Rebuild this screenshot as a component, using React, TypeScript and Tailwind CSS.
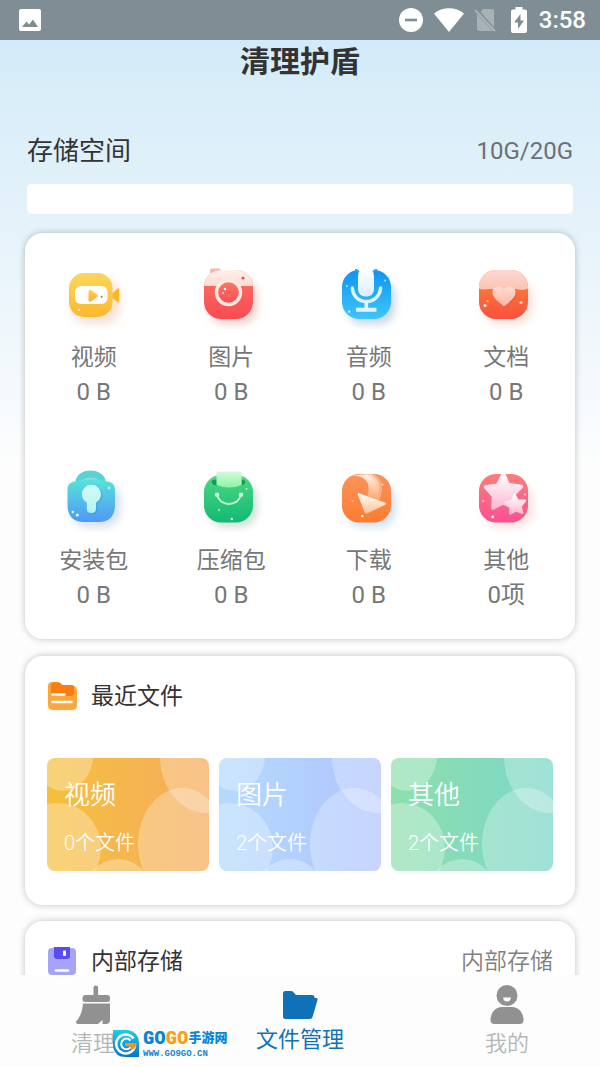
import type { ReactNode } from "react";

function Sheen({ id, from, to, diagonal }: { id: string; from: string; to: string; diagonal?: boolean }) {
  return (
    <linearGradient id={id} x1="0" y1="0" x2={diagonal ? "1" : "0"} y2="1">
      <stop offset="0" stopColor={from} />
      <stop offset="1" stopColor={to} />
    </linearGradient>
  );
}

function Glyph({ id, shadow, children }: { id: string; shadow: string; children: ReactNode }) {
  return (
    <svg width="72" height="72" viewBox="0 0 72 72" fill="none" aria-hidden="true">
      <defs>
        <filter id={`${id}-blur`} x="-30%" y="-30%" width="160%" height="160%">
          <feGaussianBlur stdDeviation="4" />
        </filter>
        <clipPath id={`${id}-clip`}>
          <rect x="9" y="13" width="49" height="49" rx="17" />
        </clipPath>
      </defs>
      <rect x="14" y="23" width="48" height="44" rx="16" fill={shadow} opacity="0.4" filter={`url(#${id}-blur)`} />
      {children}
    </svg>
  );
}

const VideoGlyph = () => (
  <Glyph id="video" shadow="#e8b890">
    <defs>
      <Sheen id="video-a" from="#fdd65c" to="#fcb92e" />
      <Sheen id="video-b" from="#ffd447" to="#f9ac36" />
    </defs>
    <path d="M54 37l5.500-5.500q1.700-.8 1.700 1v11.500q0 1.800-1.700 1L54 41z" fill="#fdb52e" />
    <rect x="11" y="16" width="43.500" height="44" rx="15" fill="url(#video-a)" />
    <rect x="17" y="29" width="32.500" height="18" rx="6" fill="#fff" />
    <path d="M30.500 34.500c0-1.800 1.500-2.300 2.800-1.200l5.700 4.200c1 .8 1 1.800 0 2.600l-5.700 4.200c-1.300 1-2.800.4-2.800-1.200z" fill="url(#video-b)" />
    <circle cx="43.700" cy="39.700" r="1" fill="#a8834f" />
    <circle cx="21" cy="53" r="1.100" fill="#fff" opacity=".8" />
  </Glyph>
);

const CameraGlyph = () => (
  <Glyph id="camera" shadow="#d48478">
    <defs>
      <Sheen id="camera-a" from="#fb7468" to="#fa4a52" />
      <Sheen id="camera-b" from="#fff0e8" to="#fddcd2" />
      <Sheen id="camera-c" from="#fb7a68" to="#f54b55" />
    </defs>
    <path d="M15 16v-2.500q0-2 2-2h7q2 0 2 2V16z" fill="#fbb6ac" />
    <g clipPath="url(#camera-clip)">
      <rect x="9" y="13" width="49" height="49" fill="url(#camera-a)" />
      <rect x="9" y="13" width="49" height="16" fill="url(#camera-b)" />
    </g>
    <circle cx="33.500" cy="35.500" r="12" fill="url(#camera-c)" stroke="#ffe9e1" strokeWidth="3.400" />
    <circle cx="48" cy="21" r="1.500" fill="#e84c55" />
    <circle cx="30" cy="32" r="1.200" fill="#fff" />
    <circle cx="28" cy="36" r=".8" fill="#fff" />
    <circle cx="34" cy="39" r=".6" fill="#ffd36a" />
  </Glyph>
);

const MicGlyph = () => (
  <Glyph id="mic" shadow="#6f9cc4">
    <defs>
      <Sheen id="mic-a" from="#0e95f2" to="#40c5fb" />
      <Sheen id="mic-b" from="#ffffff" to="#d9effd" />
    </defs>
    <rect x="9" y="13" width="49" height="49" rx="17" fill="url(#mic-a)" />
    <path d="M20 12c4.500.5 6 3 6 7h14c0-4 1.500-6.500 6-7z" fill="#fff" />
    <path d="M22 12.700c3.500 0 4.500 2.500 4.500 5M44 12.700c-3.500 0-4.500 2.500-4.500 5" stroke="#1898f0" strokeWidth="1.200" />
    <rect x="25" y="12" width="16" height="27.500" rx="7" fill="url(#mic-b)" />
    <path d="M19.300 31c.8 8.500 6.500 13.500 14 13.500S46.800 39.500 47.600 31" stroke="#e1f4fe" strokeWidth="3.400" strokeLinecap="round" />
    <path d="M33.300 45v7" stroke="#e1f4fe" strokeWidth="3.600" />
    <rect x="23" y="50.700" width="20.500" height="4" rx="1" fill="#e1f4fe" />
    <circle cx="14" cy="29" r="1" fill="#fff" opacity=".7" />
    <circle cx="52" cy="23.500" r="1" fill="#fff" opacity=".7" />
    <circle cx="16.200" cy="54.500" r="1.200" fill="#fff" opacity=".8" />
  </Glyph>
);

const HeartGlyph = () => (
  <Glyph id="heart" shadow="#e8ac98">
    <defs>
      <Sheen id="heart-a" from="#fc8a3c" to="#f9503c" />
      <Sheen id="heart-b" from="#fbd9d5" to="#fdc0ae" />
      <Sheen id="heart-c" from="#ffdcd6" to="#ffb4a0" />
    </defs>
    <g clipPath="url(#heart-clip)">
      <rect x="9" y="13" width="49" height="49" fill="url(#heart-a)" />
      <path d="M9 13h49v18.500c-5 2.500-9 1-13 .5s-8 2.500-12 2.500-8-2-12-2.500-8 1.500-12-.5z" fill="url(#heart-b)" />
    </g>
    <path d="M34 49.500C30 46 22.500 41 22.500 35.500c0-6.500 8-8 11.500-3 3.500-5 11.500-3.500 11.500 3C45.500 41 38 46 34 49.500z" fill="#d9502c" opacity=".25" transform="translate(1 1.500)" />
    <path d="M34 49.500C30 46 22.500 41 22.500 35.500c0-6.500 8-8 11.500-3 3.500-5 11.500-3.500 11.500 3C45.500 41 38 46 34 49.500z" fill="url(#heart-c)" />
    <circle cx="15" cy="48.500" r="1.500" fill="#fff" opacity=".9" />
    <circle cx="17.500" cy="44" r="1" fill="#fff" opacity=".6" />
    <circle cx="51" cy="45.500" r="1.500" fill="#fff" opacity=".8" />
  </Glyph>
);

const LockGlyph = () => (
  <Glyph id="lock" shadow="#8fb0d4">
    <defs>
      <Sheen id="lock-a" from="#57e3d9" to="#4f97f8" />
      <Sheen id="lock-b" from="#d3fcf6" to="#b3f3f4" />
    </defs>
    <path d="M17.500 22a15 11.500 0 0 1 30 0z" fill="#57d3da" />
    <path d="M24 21a9 5 0 0 1 17 0z" fill="#a3d5cf" />
    <path d="M9.500 31c0-6 1.500-8 7-9.500 5.500-1.400 10-2 16.500-2s11 .6 16.500 2c5.500 1.500 7.500 3.500 7.500 9.500v14c0 11-6 17-16 17H25.500c-10 0-16-6-16-17z" fill="url(#lock-a)" />
    <path d="M28.800 42.500a9.500 9.500 0 1 1 9.200 0V49q0 4-4.600 4t-4.600-4z" fill="#348cc7" opacity=".35" transform="translate(1.500 1)" />
    <path d="M28.800 42.500a9.500 9.500 0 1 1 9.200 0V49q0 4-4.600 4t-4.600-4z" fill="url(#lock-b)" />
    <circle cx="14.800" cy="52" r="1.200" fill="#fff" opacity=".9" />
    <circle cx="19.300" cy="55" r="1.600" fill="#fff" opacity=".9" />
    <circle cx="51" cy="28" r="1.400" fill="#fff" opacity=".6" />
  </Glyph>
);

const BagGlyph = () => (
  <Glyph id="bag" shadow="#8fb09c">
    <defs>
      <Sheen id="bag-a" from="#4fd782" to="#10ba74" />
      <Sheen id="bag-b" from="#d5fbdc" to="#8cf4a4" />
    </defs>
    <rect x="9" y="15" width="49" height="47.500" rx="17" fill="url(#bag-a)" />
    <path d="M16.500 21.500q1-2 5-2h24q4 0 5 2-1 4-5 4h-24q-4 0-5-4z" fill="#109b56" />
    <path d="M21.500 11.500h25.200V25q-12.600 5-25.200 0z" fill="url(#bag-b)" />
    <path d="M22 35c3 12 21 12 24 0" stroke="#c4f7d8" strokeWidth="1.800" strokeLinecap="round" />
    <circle cx="22" cy="34.700" r="2.300" fill="#c4f7d8" />
    <circle cx="46" cy="34.700" r="2.300" fill="#c4f7d8" />
    <circle cx="24" cy="50" r="1" fill="#fff" opacity=".7" />
    <circle cx="36.800" cy="59" r="1.200" fill="#fff" opacity=".9" />
    <circle cx="51.500" cy="29" r="1" fill="#fff" opacity=".6" />
  </Glyph>
);

const DownloadGlyph = () => (
  <Glyph id="download" shadow="#80b4d4">
    <defs>
      <Sheen id="download-a" from="#fa9459" to="#fc7c31" />
      <Sheen id="download-b" from="#fff3ea" to="#fca468" />
      <Sheen id="download-c" from="#ffffff" to="#fdc08f" />
    </defs>
    <rect x="9" y="14" width="49" height="48.500" rx="17" fill="url(#download-a)" />
    <path d="M17 15.500c16-1 22 8 17 22l8 3c8-14 4-21-4-26.500z" fill="url(#download-b)" />
    <path d="M33 14c11 5 14 15 9 26l4 1c6-14 3-23-6-27z" fill="#fdc49e" opacity=".6" />
    <path d="M26 33.200l26.300 9.600q1.800.9 0 1.900L34 53.500q-1.500.6-2.300-.9l-7-18q-.4-2 1.300-1.400z" fill="url(#download-c)" />
    <circle cx="19.500" cy="41" r="1" fill="#fff" opacity=".5" />
    <circle cx="29.300" cy="56" r="1.300" fill="#fff" opacity=".9" />
    <circle cx="49.500" cy="24.500" r="1.100" fill="#fff" opacity=".6" />
  </Glyph>
);

const StarGlyph = () => (
  <Glyph id="star" shadow="#ecb0a0">
    <defs>
      <Sheen id="star-a" from="#fb7f7a" to="#fa5192" />
      <Sheen id="star-b" from="#ffffff" to="#ffb8d2" />
    </defs>
    <rect x="9" y="14" width="49" height="48.500" rx="17" fill="url(#star-a)" />
    <path d="M33.500 13.500l4.500 11 13.500 2-9.200 9.500 1.800 12L33 43 22.800 48.200l.7-12.200-8-9 12-1.700z" fill="url(#star-b)" stroke="url(#star-b)" strokeWidth="3.400" strokeLinejoin="round" />
    <path d="M44.500 34.500l3.300 5.900 7.300.2-4.300 5.700 1.600 6.800-6.500-2.500-5.800 3.200.2-6.700-5-4.700 6.700-1.600z" fill="url(#star-b)" stroke="url(#star-b)" strokeWidth="2" strokeLinejoin="round" />
    <circle cx="22.800" cy="57" r="1.400" fill="#fff" opacity=".9" />
    <circle cx="13" cy="41" r="1" fill="#fff" opacity=".5" />
    <circle cx="55" cy="34.500" r="1.100" fill="#fff" opacity=".6" />
  </Glyph>
);

const categories = [
  { name: "视频", size: "0 B", Icon: VideoGlyph },
  { name: "图片", size: "0 B", Icon: CameraGlyph },
  { name: "音频", size: "0 B", Icon: MicGlyph },
  { name: "文档", size: "0 B", Icon: HeartGlyph },
  { name: "安装包", size: "0 B", Icon: LockGlyph },
  { name: "压缩包", size: "0 B", Icon: BagGlyph },
  { name: "下载", size: "0 B", Icon: DownloadGlyph },
  { name: "其他", size: "0项", Icon: StarGlyph },
];

const recents = [
  { name: "视频", count: "0个文件", tone: "bg-linear-to-r from-[#f5c03c] to-[#f5ab5c]" },
  { name: "图片", count: "2个文件", tone: "bg-linear-to-r from-[#b5dafc] to-[#b0c4ff]" },
  { name: "其他", count: "2个文件", tone: "bg-linear-to-r from-[#8ee0ac] to-[#7bd6c8]" },
];

function Bubbles() {
  return (
    <svg className="absolute inset-0 h-full w-full" viewBox="0 0 162 113" preserveAspectRatio="none" fill="#fff" aria-hidden="true">
      <ellipse cx="16" cy="-3" rx="30" ry="36" opacity=".3" />
      <ellipse cx="11" cy="90" rx="43" ry="45" opacity=".3" />
      <ellipse cx="71" cy="141" rx="36" ry="40" opacity=".3" />
      <ellipse cx="159" cy="-1" rx="46" ry="56" opacity=".28" />
      <ellipse cx="135" cy="86" rx="44" ry="56" opacity=".28" />
    </svg>
  );
}

function StatusBar() {
  return (
    <header className="flex h-10 shrink-0 items-center bg-[#7f8e94] pr-3.5 pl-[19px] text-white">
      <svg width="22" height="22" viewBox="0 0 22 22" aria-label="图片通知">
        <rect width="22" height="22" rx="2" fill="#fff" />
        <path d="M3 18l4.500-5.500 2.500 3 4-5L19 18z" fill="#7f8e94" />
      </svg>
      <div className="ml-auto flex items-center">
        <svg width="24" height="24" viewBox="0 0 24 24" aria-label="勿扰">
          <circle cx="12" cy="12" r="12" fill="#fff" />
          <path d="M6 12h12" stroke="#7f8e94" strokeWidth="2.600" />
        </svg>
        <svg className="ml-[11px]" width="30" height="24" viewBox="0 0 30 24" aria-label="无线网络">
          <path d="M0 5.500C8.500-1.500 21.500-1.500 30 5.500L15 24z" fill="#fff" />
        </svg>
        <svg className="ml-2.5" width="22" height="24" viewBox="0 0 22 24" aria-label="无 SIM 卡">
          <path d="M9 1h9q2 0 2 2v16L6.500 4zM3 6l16 17H5q-2 0-2-2z" fill="#a7b2b7" />
          <path d="M1 2l20 21" stroke="#a7b2b7" strokeWidth="2" />
        </svg>
        <svg className="ml-[15px]" width="16" height="26" viewBox="0 0 16 26" aria-label="正在充电">
          <path d="M4.500 0h7v2.500H14q2 0 2 2V24q0 2-2 2H2q-2 0-2-2V4.500q0-2 2-2h2.500z" fill="#fff" />
          <path d="M9.500 7L3 15.500h4V22l6-8.500H9.500z" fill="#7f8e94" />
        </svg>
        <time className="ml-3 text-2xl leading-8 font-medium">3:58</time>
      </div>
    </header>
  );
}

function Watermark() {
  return (
    <div className="pointer-events-none absolute bottom-2 left-[113px] flex items-center gap-1 whitespace-nowrap" aria-hidden="true">
      <svg width="26" height="27" viewBox="0 0 26 27" fill="none">
        <defs>
          <Sheen id="mark" from="#1ad0e8" to="#0a6fd0" />
        </defs>
        <path d="M0 0h15q11 2 11 13v14H13Q2 27 0 17z" fill="url(#mark)" />
        <path d="M20.500 8.500A9.500 9.500 0 1 0 22 16" stroke="#fff" strokeWidth="2.600" />
        <path d="M17.500 10.500a5.300 5.300 0 1 0 1 5" stroke="#fff" strokeWidth="2" />
        <path d="M12 13h12q-1 6-6 7 1-4-6-4z" fill="#f7941e" />
      </svg>
      <div className="flex flex-col">
        <div className="flex items-center leading-[22px] font-black">
          <span className="font-['Roboto_Condensed','Liberation_Sans_Narrow',sans-serif] text-[19px] text-[#0b84d8]">GO</span>
          <span className="font-['Roboto_Condensed','Liberation_Sans_Narrow',sans-serif] text-[19px] text-[#f9a010]">GO</span>
          <span className="text-[13px] text-[#0b84d8]">手游网</span>
        </div>
        <span className="font-['Liberation_Mono',monospace] text-[9px] leading-[10px] font-bold text-[#1486d4]">WWW.GO9GO.CN</span>
      </div>
    </div>
  );
}

const panel = "rounded-[18px] bg-white shadow-[0_0_7px_rgba(0,0,0,0.24)]";

export default function App() {
  return (
    <div className="flex h-screen flex-col overflow-hidden bg-[#fdfdfd] font-['Roboto','Noto_Sans_CJK_SC',sans-serif] text-[#333]">
      <StatusBar />
      <main className="min-h-0 flex-1 overflow-y-auto bg-linear-to-b from-[#d3ebf8] to-[#fdfdfd] to-[430px] px-[25px] [scrollbar-width:none]">
        <h1 className="pt-px text-center text-3xl leading-[42px] font-bold">清理护盾</h1>

        <section className="mt-[50px] px-0.5">
          <div className="flex items-center justify-between leading-9">
            <h2 id="storage" className="text-[26px]">存储空间</h2>
            <span className="text-2xl text-[#6b7175]">10G/20G</span>
          </div>
          <div role="progressbar" aria-labelledby="storage" aria-valuenow={0} className="mt-[15px] h-[30px] rounded-[5px] bg-white" />
        </section>

        <section className={`${panel} mt-[19px] grid grid-cols-4 gap-y-[50px] pt-6 pb-[26px]`}>
          {categories.map(({ name, size, Icon }) => (
            <button key={name} type="button" className="flex flex-col items-center text-[23px] leading-[35px] text-[#777]">
              <Icon />
              <span className="mt-[11px]">{name}</span>
              <span className="text-2xl leading-[35px]">{size}</span>
            </button>
          ))}
        </section>

        <section className={`${panel} mt-[17px] px-[22px] pb-[34px]`}>
          <div className="flex h-20 items-center gap-3.5">
            <svg width="30" height="30" viewBox="0 0 30 30" aria-hidden="true">
              <path d="M1 5q0-4 4-4h6q2 0 3 1.500L15.500 4H25q5 1 5 6v14q0 5-5 5H6q-5 0-5-5z" fill="#fca63c" />
              <path d="M4 5q0-3.500 3-3.500h4q2 0 3 1.500L15.500 4H24q3 0 3 3v5q0 3-3 3H7q-3 0-3-3z" fill="#fb7d12" />
              <path d="M5.500 13.500h12M5.500 21h19" stroke="#fff" strokeWidth="2.600" strokeLinecap="round" />
            </svg>
            <h2 className="pt-0.5 text-[23px] leading-9">最近文件</h2>
          </div>
          <div className="mt-[22px] grid grid-cols-3 gap-2.5">
            {recents.map((r) => (
              <button key={r.name} type="button" className={`${r.tone} relative overflow-hidden rounded-lg px-[17px] pt-[19px] pb-[13px] text-left font-[350] text-white`}>
                <Bubbles />
                <span className="relative block text-[26px] leading-9">{r.name}</span>
                <span className="relative mt-[15px] block text-xl leading-[30px]">{r.count}</span>
              </button>
            ))}
          </div>
        </section>

        <section className={`${panel} mt-4 mb-4 px-[22px]`}>
          <div className="flex h-20 items-center gap-3.5">
            <svg width="30" height="30" viewBox="0 0 30 30" aria-hidden="true">
              <rect x="1" y="2" width="28" height="27" rx="4" fill="#a5a4f8" />
              <path d="M7 1h16v9q0 3-3 3H10q-3 0-3-3z" fill="#594df0" />
              <rect x="16" y="4.500" width="3" height="5.500" rx="1" fill="#fff" />
              <path d="M9 24.500h12" stroke="#fff" strokeWidth="2.600" strokeLinecap="round" />
            </svg>
            <h2 className="pt-0.5 text-[23px] leading-9">内部存储</h2>
            <span className="ml-auto pt-0.5 text-[23px] leading-9 font-[350] text-[#808080]">内部存储</span>
          </div>
        </section>
      </main>

      <nav className="relative flex h-[92px] shrink-0 justify-between bg-[#fdfdfd] px-[49px] text-[22px] leading-8 font-[350]">
        <a href="#clean" className="flex w-[88px] flex-col items-center pt-2.5 text-[#b4b5b8]">
          <svg width="36" height="40" viewBox="0 0 36 40" fill="#919191" aria-hidden="true">
            <path d="M18.500 2.500q0-2 2.300-2t2.300 2V10h9q2.900 0 2.900 3v1.500q0 2.500-2.900 2.500H10.500Q7.500 17 7.500 14.500V13q0-3 3-3h8z" />
            <path d="M8 18.500h27V35q0 4-4 4h-3.500v-4l-4.500 4H3q-3-.3-1.500-3Q7 30 8 18.500z" />
          </svg>
          <span className="mt-[3px]">清理</span>
        </a>
        <a href="#files" className="flex w-[88px] flex-col items-center pt-4 text-[#0f71b8]">
          <svg width="36" height="28" viewBox="0 0 36 28" fill="#0f71b8" aria-hidden="true">
            <path d="M1 2.500Q1 0 3.500 0H9q1.500 0 2.500 1.200L14 4h16q2.500 0 2.500 2v1H34q2 0 1.500 2l-5 17q-.6 2-2.500 2H3.500Q1 28 1 25.500z" />
          </svg>
          <span className="mt-[5px] whitespace-nowrap font-normal">文件管理</span>
        </a>
        <a href="#me" className="flex w-[88px] flex-col items-center pt-2.5 text-[#b4b5b8]">
          <svg width="36" height="40" viewBox="0 0 36 40" fill="#919191" aria-hidden="true">
            <circle cx="18" cy="10.500" r="10.500" />
            <path d="M14 12.500h8q-.5 4-4 4t-4-4z" fill="#fdfdfd" />
            <path d="M13 22h10c7 0 11 6 11.500 12q.3 5-4 5h-25q-4.300 0-4-5C2 28 6 22 13 22z" />
          </svg>
          <span className="mt-[3px]">我的</span>
        </a>
        <Watermark />
      </nav>
    </div>
  );
}
